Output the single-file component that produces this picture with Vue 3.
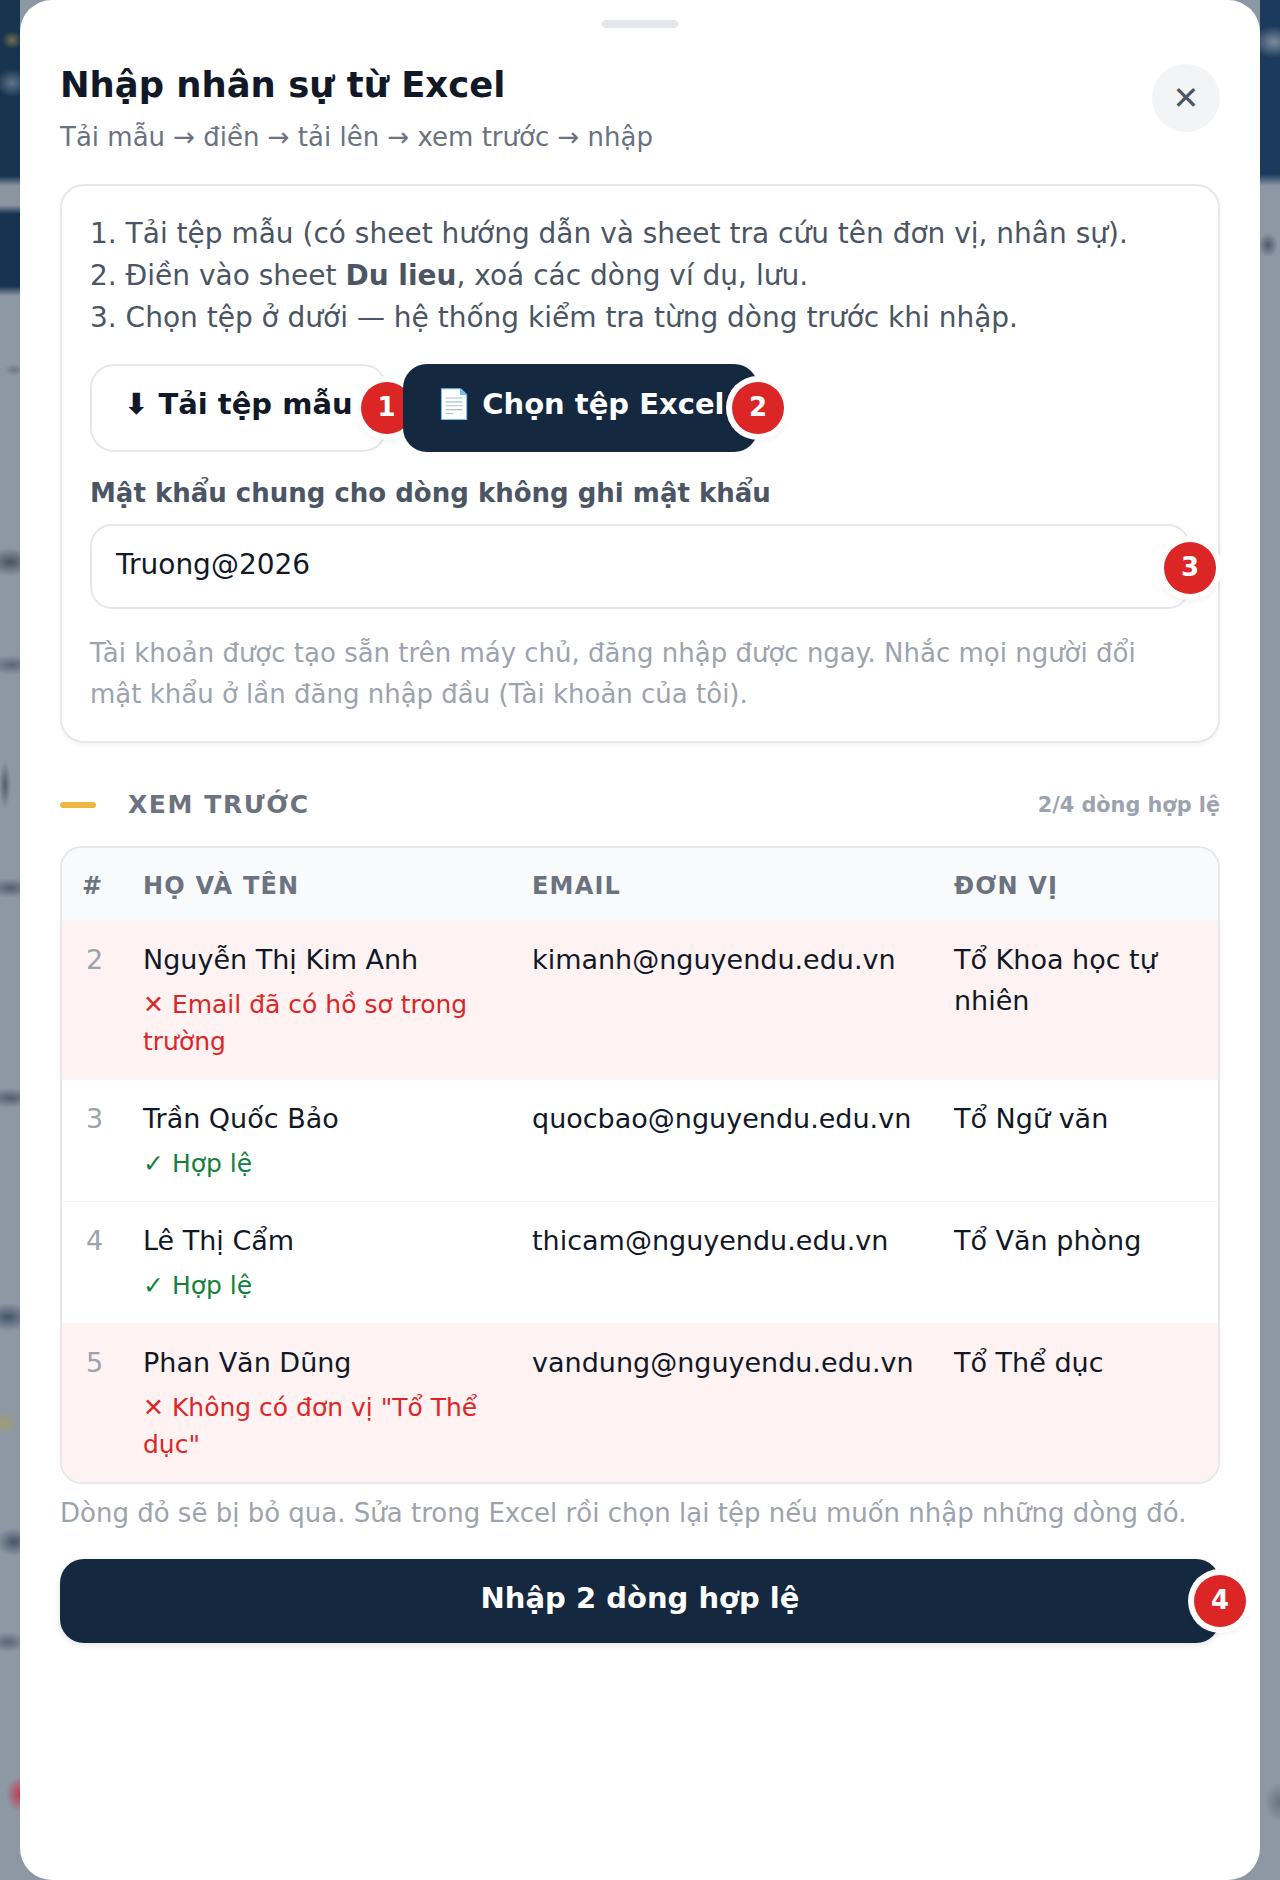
<script setup>
const steps = [
  'Tải tệp mẫu (có sheet hướng dẫn và sheet tra cứu tên đơn vị, nhân sự).',
  null,
  'Chọn tệp ở dưới — hệ thống kiểm tra từng dòng trước khi nhập.',
]
const rows = [
  { n: 2, name: 'Nguyễn Thị Kim Anh', email: 'kimanh@nguyendu.edu.vn', unit: 'Tổ Khoa học tự nhiên', ok: false, msg: '✕ Email đã có hồ sơ trong trường' },
  { n: 3, name: 'Trần Quốc Bảo', email: 'quocbao@nguyendu.edu.vn', unit: 'Tổ Ngữ văn', ok: true, msg: '✓ Hợp lệ' },
  { n: 4, name: 'Lê Thị Cẩm', email: 'thicam@nguyendu.edu.vn', unit: 'Tổ Văn phòng', ok: true, msg: '✓ Hợp lệ' },
  { n: 5, name: 'Phan Văn Dũng', email: 'vandung@nguyendu.edu.vn', unit: 'Tổ Thể dục', ok: false, msg: '✕ Không có đơn vị "Tổ Thể dục"' },
]
</script>

<template>
  <div class="page">
    <section class="sheet">
      <div class="handle"></div>
      <header class="head">
        <div>
          <h1 class="title">Nhập nhân sự từ Excel</h1>
          <p class="sub">Tải mẫu → điền → tải lên → xem trước → nhập</p>
        </div>
        <button class="close">✕</button>
      </header>

      <div class="card">
        <ol class="steps">
          <li>1. {{ steps[0] }}</li>
          <li>2. Điền vào sheet <b>Du lieu</b>, xoá các dòng ví dụ, lưu.</li>
          <li>3. {{ steps[2] }}</li>
        </ol>
        <div class="actions">
          <button class="btn light">⬇ Tải tệp mẫu<span class="badge">1</span></button>
          <button class="btn dark">📄 Chọn tệp Excel<span class="badge">2</span></button>
        </div>
        <label class="label">Mật khẩu chung cho dòng không ghi mật khẩu</label>
        <div class="field">
          <div class="input">Truong@2026</div>
          <span class="badge">3</span>
        </div>
        <p class="hint">Tài khoản được tạo sẵn trên máy chủ, đăng nhập được ngay. Nhắc mọi người đổi mật khẩu ở lần đăng nhập đầu (Tài khoản của tôi).</p>
      </div>

      <div class="section">
        <span class="bar"></span>
        <span class="sec-title">XEM TRƯỚC</span>
        <span class="sec-count">2/4 dòng hợp lệ</span>
      </div>

      <div class="table">
        <div class="row thead">
          <div>#</div><div>HỌ VÀ TÊN</div><div>EMAIL</div><div>ĐƠN VỊ</div>
        </div>
        <div v-for="r in rows" :key="r.n" class="row" :class="{ bad: !r.ok }">
          <div class="num">{{ r.n }}</div>
          <div>
            <div>{{ r.name }}</div>
            <div class="status" :class="r.ok ? 'good' : 'err'">{{ r.msg }}</div>
          </div>
          <div>{{ r.email }}</div>
          <div>{{ r.unit }}</div>
        </div>
      </div>
      <p class="note">Dòng đỏ sẽ bị bỏ qua. Sửa trong Excel rồi chọn lại tệp nếu muốn nhập những dòng đó.</p>
      <button class="submit">Nhập 2 dòng hợp lệ<span class="badge">4</span></button>
    </section>
  </div>
</template>

<style>
html, body { margin: 0; }
</style>

<style scoped>
.page {
  height: 1880px;
  padding: 0 20px;
  box-sizing: border-box;
  font-family: "DejaVu Sans", sans-serif;
  background:
    radial-gradient(ellipse 10px 9px at 12px 40px, #706f52, transparent),
    radial-gradient(ellipse 16px 14px at 12px 83px, #5f7389, transparent),
    radial-gradient(ellipse 22px 16px at 1274px 42px, #7d8c9c, transparent),
    radial-gradient(ellipse 10px 12px at 1268px 245px, #505a69, transparent),
    radial-gradient(ellipse 10px 6px at 14px 370px, #6d7885, transparent),
    radial-gradient(ellipse 24px 14px at 10px 562px, #48545f, transparent),
    radial-gradient(ellipse 24px 10px at 12px 665px, #5a6674, transparent),
    radial-gradient(ellipse 6px 24px at 5px 785px, #55606e, transparent),
    radial-gradient(ellipse 24px 10px at 10px 888px, #55616f, transparent),
    radial-gradient(ellipse 24px 10px at 10px 1098px, #525e6c, transparent),
    radial-gradient(ellipse 24px 14px at 8px 1317px, #44546a, transparent),
    radial-gradient(ellipse 14px 12px at 4px 1423px, #a19c72, transparent),
    radial-gradient(ellipse 18px 14px at 14px 1542px, #465468, transparent),
    radial-gradient(ellipse 20px 10px at 8px 1642px, #5b6674, transparent),
    radial-gradient(ellipse 14px 18px at 20px 1794px, #c23a4a, transparent),
    radial-gradient(ellipse 16px 20px at 1280px 1802px, #69737f, transparent),
    linear-gradient(to bottom, transparent 286px, #8d98a5 296px),
    linear-gradient(to bottom, #18344f 176px, #8a95a2 186px, #8a95a2 205px, #17324f 214px) left top / 20px 100% no-repeat,
    linear-gradient(to bottom, #1b3a5c 174px, #8d98a5 186px) right top / 20px 100% no-repeat,
    #8d98a5;
}
.sheet {
  height: 1880px;
  box-sizing: border-box;
  background: #fff;
  border-radius: 32px;
  padding: 20px 40px 0;
}
.handle {
  width: 76px;
  height: 8px;
  border-radius: 4px;
  background: #e5e7eb;
  margin: 0 auto;
}
.head {
  display: flex;
  justify-content: space-between;
  align-items: flex-start;
  margin-top: 34px;
}
.title {
  margin: 0;
  font-size: 35.4px;
  line-height: 46px;
  font-weight: 700;
  color: #111827;
}
.sub {
  margin: 10px 0 0;
  font-size: 26px;
  line-height: 38px;
  color: #6b7280;
}
.close {
  width: 68px;
  height: 68px;
  margin-top: 2px;
  padding: 0;
  border: 0;
  border-radius: 50%;
  background: #f3f4f6;
  color: #4b5563;
  font: 32px "DejaVu Sans", sans-serif;
}
.card {
  margin-top: 28px;
  padding: 27px 28px 26px;
  border: 2px solid #e5e7eb;
  border-radius: 24px;
  box-shadow: 0 2px 4px rgba(17, 24, 39, .05);
}
.steps {
  margin: 0;
  padding: 0;
  list-style: none;
  font-size: 28px;
  line-height: 42px;
  color: #4b5563;
}
.actions {
  display: flex;
  gap: 16px;
  margin-top: 25px;
}
.btn {
  position: relative;
  height: 88px;
  padding: 0 33.5px 8px;
  border-radius: 24px;
  font: 700 29px "DejaVu Sans", sans-serif;
  box-sizing: border-box;
}
.light {
  padding: 0 32px 8px;
  border: 2px solid #e5e7eb;
  background: #fff;
  color: #111827;
}
.light .badge { right: -28px; }
.dark {
  border: 0;
  background: #14293f;
  color: #fff;
}
.badge {
  position: absolute;
  right: -26px;
  top: 50%;
  width: 52px;
  height: 52px;
  margin-top: -26px;
  border-radius: 50%;
  background: #dc2626;
  color: #fff;
  font: 700 26px/50px "DejaVu Sans", sans-serif;
  text-align: center;
  box-shadow: 0 0 0 6px #fff, 0 4px 10px rgba(17, 24, 39, .15);
}
.label {
  display: block;
  margin-top: 22px;
  font-size: 26px;
  line-height: 38px;
  font-weight: 700;
  color: #4b5563;
}
.field {
  position: relative;
  margin: 12px 0 0;
}
.field .badge { margin-top: -25px; }
.input {
  height: 85px;
  box-sizing: border-box;
  padding: 0 24px;
  border: 2px solid #e5e7eb;
  border-radius: 22px;
  font-size: 28px;
  line-height: 77px;
  color: #111827;
}
.hint {
  margin: 24px 0 0;
  font-size: 26px;
  line-height: 41px;
  color: #9ca3af;
}
.section {
  display: flex;
  align-items: center;
  margin-top: 44px;
}
.bar {
  width: 36px;
  height: 6px;
  border-radius: 3px;
  background: #ecb640;
  margin-right: 32px;
}
.sec-title {
  font-size: 25px;
  line-height: 36px;
  font-weight: 700;
  letter-spacing: 1.6px;
  color: #6b7280;
}
.sec-count {
  margin-left: auto;
  font-size: 20.8px;
  font-weight: 700;
  color: #9ca3af;
}
.table {
  margin-top: 23px;
  border: 2px solid #e5e7eb;
  border-radius: 22px;
  overflow: hidden;
  font-size: 27px;
  line-height: 41px;
  color: #111827;
}
.row {
  display: grid;
  grid-template-columns: 61px 389px 422px 1fr;
  padding: 18px 20px 19px;
  border-top: 1px solid #f3f4f6;
}
.thead {
  border-top: 0;
  height: 72px;
  box-sizing: border-box;
  background: #f8fafc;
  font-size: 24px;
  font-weight: 700;
  letter-spacing: 1.2px;
  color: #6b7280;
}
.bad { background: #fef2f2; }
.num { color: #9ca3af; padding-left: 4px; }
.status {
  margin-top: 6px;
  padding-right: 24px;
  font-size: 25px;
  line-height: 37px;
}
.good { color: #15803d; }
.err { color: #dc2626; }
.note {
  margin: 10px 0 0;
  font-size: 26px;
  line-height: 38px;
  color: #9ca3af;
}
.submit {
  position: relative;
  display: block;
  width: 100%;
  height: 84px;
  margin-top: 27px;
  padding-bottom: 7px;
  border: 0;
  border-radius: 24px;
  background: #14293f;
  color: #fff;
  font: 700 29px "DejaVu Sans", sans-serif;
  box-shadow: 0 2px 6px rgba(17, 24, 39, .12);
}
</style>
